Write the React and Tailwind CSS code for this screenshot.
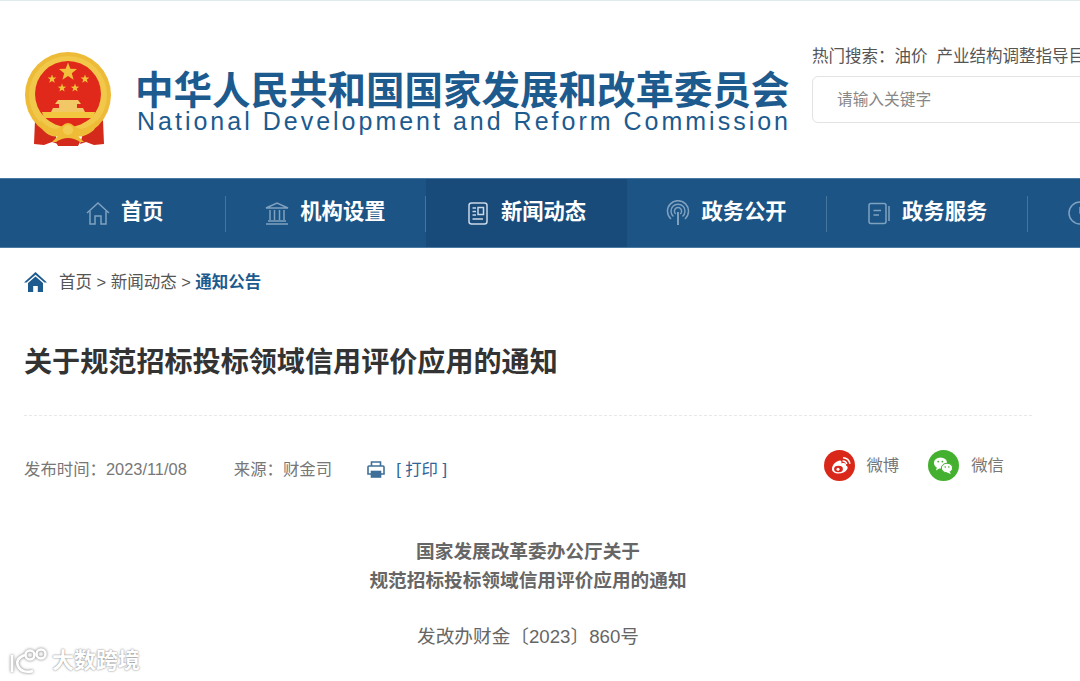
const NAV = [
  { label: "首页", icon: "home" },
  { label: "机构设置", icon: "bank" },
  { label: "新闻动态", icon: "news", active: true },
  { label: "政务公开", icon: "signal" },
  { label: "政务服务", icon: "book" },
  { label: "互动交流", icon: "clock" },
];

const STARS = [
  { x: 44, y: 20, r: 9.5 },
  { x: 28, y: 27, r: 4.6 },
  { x: 61, y: 27, r: 4.6 },
  { x: 38, y: 36, r: 4.4 },
  { x: 51, y: 36, r: 4.4 },
];

const starPoints = ({ x, y, r }) =>
  Array.from({ length: 10 }, (_, i) => {
    const a = (-90 + i * 36) * (Math.PI / 180);
    const d = i % 2 === 0 ? r : r * 0.42;
    return `${x + d * Math.cos(a)},${y + d * Math.sin(a)}`;
  }).join(" ");

const Emblem = () => (
  <svg width="90" height="96" viewBox="0 0 90 96" className="shrink-0">
    <path d="M11 68 L10 92 L20 93 L28 90 L34 92 L30 78Z" fill="#d32a1c" />
    <path d="M79 68 L80 92 L70 93 L62 90 L56 92 L60 78Z" fill="#d32a1c" />
    <circle cx="44" cy="43" r="43" fill="#edbb38" />
    <circle cx="44" cy="43" r="39" fill="#f1c84a" />
    <circle cx="44" cy="42" r="33" fill="#e0291b" />
    {STARS.map((s) => (
      <polygon key={s.x} points={starPoints(s)} fill="#f2c13b" />
    ))}
    <path d="M34 48 H54 L57 52 H53 V56 H59 L61 60 H27 L29 56 H35 V52 H31Z" fill="#f2c765" />
    <path d="M18 60 H71 L69 66 H20Z" fill="#f3c63f" />
    <path d="M22 66 H67 Q58 73 44 73 Q30 73 22 66Z" fill="#e0291b" />
    <path d="M16 68 Q30 82 38 74 Q44 68 50 74 Q58 82 73 68 L70 78 Q60 86 54 84 L60 90 H28 L34 84 Q26 86 19 78Z" fill="#eebc36" />
    <path d="M32 90 Q44 82 56 90 L54 94 H34Z" fill="#d32a1c" />
    <circle cx="44" cy="78" r="5" fill="#f3cd52" />
  </svg>
);

const NavIcon = ({ name }) => {
  const common = {
    width: 26,
    height: 26,
    viewBox: "0 0 26 26",
    fill: "none",
    stroke: "#7fa1c0",
    strokeWidth: 1.5,
    className: "shrink-0",
  };
  if (name === "home")
    return (
      <svg {...common}>
        <path d="M2 13 L13 3 L24 13" />
        <path d="M5 11 V24 H10 V16 H16 V24 H21 V11" />
      </svg>
    );
  if (name === "bank")
    return (
      <svg {...common}>
        <path d="M2 8 L13 3 L24 8Z" />
        <path d="M2 24 H24 M4 21 H22 M6 10 V20 M10.5 10 V20 M15.5 10 V20 M20 10 V20" />
      </svg>
    );
  if (name === "news")
    return (
      <svg {...common} stroke="#c9d8e6">
        <rect x="4" y="3" width="18" height="21" rx="2.5" />
        <path d="M7.5 8 H11 M7.5 11.5 H11 M7.5 15 H11 M7.5 19 H18" />
        <rect x="13" y="7.5" width="5.5" height="7" />
      </svg>
    );
  if (name === "signal")
    return (
      <svg {...common}>
        <path d="M6 19 A10.5 10.5 0 1 1 20 19" />
        <path d="M8.5 16.5 A7 7 0 1 1 17.5 16.5" />
        <path d="M10.8 14 A3.6 3.6 0 1 1 15.2 14" />
        <path d="M13 12 V25" strokeWidth="2" />
      </svg>
    );
  if (name === "book")
    return (
      <svg {...common}>
        <rect x="3" y="3.5" width="17" height="20" rx="2" />
        <path d="M23 6 V21 M7.5 10.5 H15 M7.5 15 H13" />
      </svg>
    );
  return (
    <svg {...common}>
      <circle cx="13" cy="13" r="11" />
      <path d="M13 7 V13 H18" />
    </svg>
  );
};

const Weibo = () => (
  <svg width="31" height="31" viewBox="0 0 31 31" className="shrink-0">
    <circle cx="15.5" cy="15.5" r="15.5" fill="#d9281a" />
    <path d="M8 19 C8 14.5 13 10.5 16 10.5 C17.6 10.5 17.8 12 17.4 13.5 C20 12.6 22.4 13.2 22 15.5 C24 16.4 24 18 23 19.6 C21.6 22 18 23.6 14.6 23.6 C11 23.6 8 21.8 8 19Z" fill="#fff" />
    <ellipse cx="14.5" cy="19" rx="4.4" ry="3.2" fill="#d9281a" />
    <circle cx="14" cy="19.2" r="1.5" fill="#fff" />
    <path d="M18.5 11 A4 4 0 0 1 22.8 14 M19 7.8 A7.5 7.5 0 0 1 26 13.8" stroke="#fff" strokeWidth="1.4" fill="none" />
  </svg>
);

const Wechat = () => (
  <svg width="31" height="31" viewBox="0 0 31 31" className="shrink-0">
    <circle cx="15.5" cy="15.5" r="15.5" fill="#43b02f" />
    <ellipse cx="12.5" cy="13" rx="6.6" ry="5.6" fill="#fff" />
    <path d="M9 17 L8 20.5 L12 18Z" fill="#fff" />
    <ellipse cx="19" cy="18" rx="5.6" ry="4.8" fill="#fff" stroke="#43b02f" strokeWidth="1" />
    <path d="M21.5 21.5 L23 24 L18.5 22.4Z" fill="#fff" />
    <circle cx="10.2" cy="11.6" r="0.9" fill="#43b02f" />
    <circle cx="14.4" cy="11.6" r="0.9" fill="#43b02f" />
    <circle cx="17.2" cy="17" r="0.8" fill="#43b02f" />
    <circle cx="20.8" cy="17" r="0.8" fill="#43b02f" />
  </svg>
);

export default function App() {
  return (
    <div className="relative h-[681px] w-[1080px] overflow-hidden border-t border-[#dfeaea] bg-white font-['Liberation_Sans','Noto_Sans_CJK_SC',sans-serif] text-[#666]">
      <header className="flex h-[177px] pl-6">
        <div className="mt-[51px] shrink-0">
          <Emblem />
        </div>
        <div className="ml-[21px] mt-[70px] w-[660px] shrink-0 text-[#1d5a8e]">
          <div className="whitespace-nowrap text-[38.5px] font-bold leading-[40px]">
            中华人民共和国国家发展和改革委员会
          </div>
          <div className="whitespace-nowrap pl-[2px] text-[25px] leading-[20px] tracking-[3px]">
            National Development and Reform Commission
          </div>
        </div>
        <div className="ml-[17px] mt-[43px] w-[300px] shrink-0">
          <div className="whitespace-nowrap text-[16.5px] leading-6 text-[#555]">
            {"热门搜索\uFF1A"}<span>油价</span>
            <span className="ml-[9px]">产业结构调整指导目录</span>
          </div>
          <div className="mt-[8px] flex h-[47px] w-[320px] items-center rounded-md border border-[#e3e3e3] pl-6 text-[15.7px] text-[#888]">
            请输入关键字
          </div>
        </div>
      </header>

      <nav className="flex h-[70px] border-y border-[#4b7ba3] bg-[#1c5485] pl-[25px]">
        {NAV.map((item, i) => (
          <div
            key={item.label}
            className={`flex w-[200.6px] shrink-0 items-center justify-center gap-[10px] pr-[2px] ${
              item.active ? "bg-[#184b7a]" : ""
            } ${i < 5 && !item.active ? "relative after:absolute after:right-0 after:top-[17px] after:h-[36px] after:w-px after:bg-[#45749c]" : ""}`}
          >
            <NavIcon name={item.icon} />
            <span className="whitespace-nowrap text-[21.3px] font-bold text-white">
              {item.label}
            </span>
          </div>
        ))}
      </nav>

      <div className="px-6">
        <div className="mt-[20px] flex h-7 items-center text-[16.5px] text-[#555]">
          <svg width="23" height="20" viewBox="0 0 23 20" className="mr-3 shrink-0">
            <path d="M11.5 0 L23 10.5 L20.5 10.5 L11.5 2.8 L2.5 10.5 L0 10.5Z" fill="#1d5a8e" />
            <path d="M4 11 L11.5 4.6 L19 11 V20 H13.8 V14 H9.2 V20 H4Z" fill="#1d5a8e" />
          </svg>
          <span>首页</span>
          <span className="mx-[4.5px]">&gt;</span>
          <span>新闻动态</span>
          <span className="mx-[4.5px]">&gt;</span>
          <span className="font-bold text-[#1d5a8e]">通知公告</span>
        </div>

        <h1 className="mt-[47px] whitespace-nowrap text-[28.1px] font-bold leading-10 text-[#333]">
          关于规范招标投标领域信用评价应用的通知
        </h1>

        <div className="mt-[32px] w-[1008px] border-t border-dashed border-[#e8e8e8]" />

        <div className="mt-[33px] flex h-[32px] w-[1008px] items-center text-[16.4px] text-[#777]">
          <div className="mt-2 flex items-center">
            <span className="whitespace-nowrap">{"发布时间\uFF1A2023/11/08"}</span>
            <span className="ml-[47px] whitespace-nowrap">{"来源\uFF1A财金司"}</span>
            <svg width="18" height="17" viewBox="0 0 18 17" fill="none" stroke="#3f6f99" strokeWidth="1.6" className="ml-[35px] shrink-0">
              <path d="M4.5 5 V1 H13.5 V5" />
              <path d="M4 13 H1 V6 Q1 5 2 5 H16 Q17 5 17 6 V13 H14" />
              <rect x="4.5" y="10.5" width="9" height="5.5" fill="#3f6f99" />
            </svg>
            <span className="ml-[11px] whitespace-nowrap text-[#2f6596]">[ 打印 ]</span>
          </div>
          <div className="ml-auto mr-7 flex items-center">
            <Weibo />
            <span className="ml-[11px] text-[#777]">微博</span>
            <div className="ml-[29px]">
              <Wechat />
            </div>
            <span className="ml-3 text-[#777]">微信</span>
          </div>
        </div>

        <div className="mt-[56px] w-[1008px] text-center text-[18.67px] leading-[29px] font-bold text-[#666]">
          <div>国家发展改革委办公厅关于</div>
          <div>规范招标投标领域信用评价应用的通知</div>
        </div>
        <div className="mt-[27px] w-[1008px] text-center text-[18.67px] leading-[29px] text-[#666]">
          发改办财金〔2023〕860号
        </div>
      </div>

      <div className="absolute left-[9px] top-[646px] flex items-center gap-[3px]">
        <svg width="40" height="28" viewBox="0 0 40 28" fill="none" stroke="#fff" strokeWidth="2.6" className="[filter:drop-shadow(0_0_1.5px_rgba(0,0,0,0.55))]">
          <path d="M3 8 V25" />
          <path d="M16 8 C9 10 7 15 9 19 C11 24 17 26 24 24" />
          <circle cx="21" cy="8" r="4.5" />
          <circle cx="32" cy="7" r="4.5" />
        </svg>
        <span className="text-[22px] font-bold leading-none text-white [text-shadow:0_0_2px_rgba(0,0,0,0.6)]">
          大数跨境
        </span>
      </div>
    </div>
  );
}
